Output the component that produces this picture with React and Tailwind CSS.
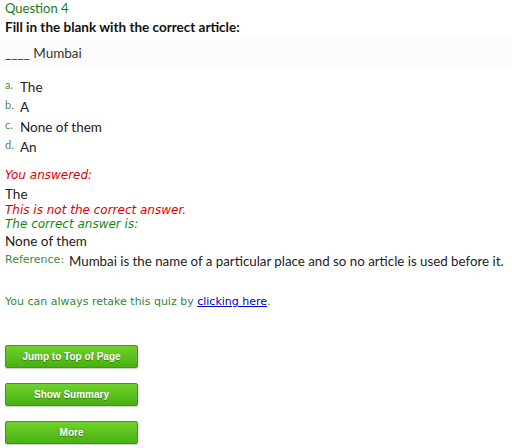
export default function App() {
  const calibri = { fontFamily: "Lato, 'Open Sans', sans-serif" };
  const verdana = { fontFamily: "'DejaVu Sans', Verdana, sans-serif" };
  const options = [
    ["a.", "The"],
    ["b.", "A"],
    ["c.", "None of them"],
    ["d.", "An"],
  ];
  const buttons = ["Jump to Top of Page", "Show Summary", "More"];
  return (
    <div className="w-[512px] h-[448px] bg-white overflow-hidden text-[#333]" style={calibri}>
      <div className="h-[17px] px-[5px] flex items-center text-[13px] text-[#1a7a1a]">Question 4</div>
      <div className="h-[20px] px-[5px] flex items-center text-[13.5px] font-bold text-[#111]">
        Fill in the blank with the correct article:
      </div>
      <div className="h-[30px] mt-[1px] px-[5px] flex items-center text-[13.5px] bg-[#fcfcfc]">____ Mumbai</div>
      <div className="mt-[9px] flex flex-col">
        {options.map(([l, t]) => (
          <div key={l} className="h-[20px] px-[5px] flex items-center">
            <span className="w-[15px] text-[11px] text-[#558855] -mt-[3px]">{l}</span>
            <span className="text-[13.5px] text-[#222]">{t}</span>
          </div>
        ))}
      </div>
      <div className="h-[20px] mt-[8px] px-[5px] flex items-center italic text-[12px] text-[#dd0000]" style={verdana}>
        You answered:
      </div>
      <div className="h-[18px] px-[5px] flex items-center text-[13.5px] text-[#222]">The</div>
      <div className="h-[14px] px-[5px] flex items-center italic text-[12px] text-[#dd0000]" style={verdana}>
        This is not the correct answer.
      </div>
      <div className="h-[13px] px-[5px] flex items-center italic text-[12px] text-[#118811]" style={verdana}>
        The correct answer is:
      </div>
      <div className="h-[20px] mt-[1px] px-[5px] flex items-center text-[13.5px] text-[#222]">None of them</div>
      <div className="h-[22px] pl-[5px] flex items-center whitespace-nowrap">
        <span className="w-[64px] shrink-0 text-[11px] text-[#448844] -mt-[3px]" style={verdana}>Reference:</span>
        <span className="text-[13.3px] text-[#222]">
          Mumbai is the name of a particular place and so no article is used before it.
        </span>
      </div>
      <div className="h-[20px] mt-[19px] px-[5px] flex items-center text-[11px] text-[#338833]" style={verdana}>
        <span>
          You can always retake this quiz by{" "}
          <a className="text-[#0000cc] underline" href="#">clicking here</a>.
        </span>
      </div>
      <div className="mt-[33px] px-[5px] flex flex-col gap-[15px]">
        {buttons.map((b) => (
          <div
            key={b}
            className="w-[133px] h-[23px] flex items-center justify-center rounded-[2px] border border-[#3c9a10] bg-gradient-to-b from-[#70d22a] to-[#48b012] text-white text-[10px] font-bold [text-shadow:0_1px_1px_rgba(0,0,0,0.35)] shadow-[0_1px_1px_rgba(0,0,0,0.2)]"
            style={{ fontFamily: "'Liberation Sans', Arial, sans-serif" }}
          >
            {b}
          </div>
        ))}
      </div>
    </div>
  );
}
